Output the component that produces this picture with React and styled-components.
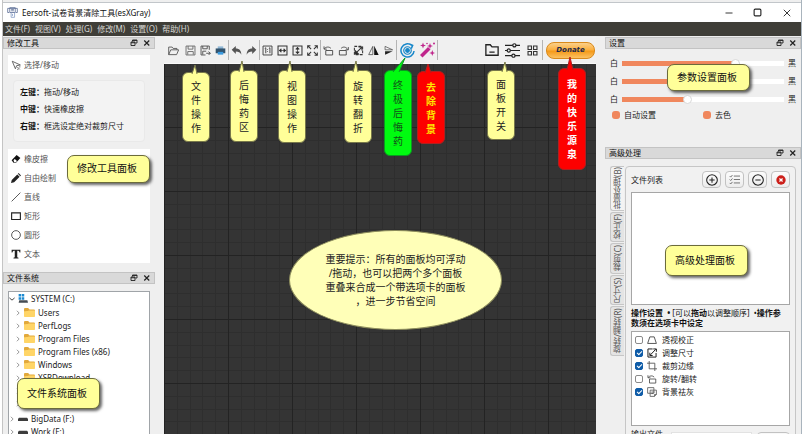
import React, { useState } from 'react';
import styled, { createGlobalStyle, css } from 'styled-components';

const GlobalStyle = createGlobalStyle`
    * {
        box-sizing: border-box;
    }
    body {
        margin: 0;
        background: #fff;
        font-family: 'Noto Sans', 'Noto Sans CJK SC', sans-serif;
        font-size: 8px;
        line-height: 12px;
        color: #222;
        overflow: hidden;
    }
    ul {
        list-style: none;
        margin: 0;
        padding: 0;
    }
    button, input {
        font: inherit;
        color: inherit;
        margin: 0;
        padding: 0;
    }
    svg {
        display: block;
        flex: none;
    }
`;

const Window = styled.div`
    height: 100vh;
    margin: 0 2px;
    padding-top: 2px;
    display: flex;
    flex-direction: column;
    background: #efefef;
    border-left: 1px solid #c4c4c4;
    border-right: 1px solid #a9b4bd;
    overflow: hidden;
`;

const TitleBar = styled.header`
    height: 20px;
    flex: none;
    display: flex;
    align-items: center;
    gap: 4px;
    padding-left: 4px;
    background: #fff;
    border-top: 1px solid #c2c6ca;
    h1 {
        margin: 0;
        flex: 1;
        font-size: 8px;
        font-weight: 400;
        color: #111;
    }
`;

const WindowButtons = styled.div`
    display: flex;
`;

const WindowButton = styled.button`
    width: 29px;
    height: 18px;
    display: flex;
    align-items: center;
    justify-content: center;
    border: 0;
    background: none;
`;

const MenuBar = styled.nav`
    height: 14px;
    flex: none;
    display: flex;
    align-items: center;
    gap: 5px;
    padding-left: 2px;
    background: #3f3e38;
`;

const MenuItem = styled.button`
    border: 0;
    background: none;
    color: #d6d6d2;
    line-height: 14px;
    white-space: nowrap;
`;

const Body = styled.div`
    flex: 1;
    min-height: 0;
    display: grid;
    grid-template-columns: 161px minmax(0, 1fr) 205px;
`;

const SideBar = styled.aside`
    min-width: 0;
    overflow: hidden;
    padding: ${(p) => (p.$right ? '1px 0 0 9px' : '1px 9px 0 0')};
`;

const Dock = styled.section`
    position: relative;
    height: ${(p) => (p.$height ? `${p.$height}px` : 'auto')};
`;

const DockHeader = styled.div`
    height: 12px;
    display: flex;
    align-items: center;
    gap: 5px;
    padding: 0 3px;
    background: #d9d9d9;
    border: 1px solid #c3c3c3;
    h2 {
        flex: 1;
        margin: 0;
        font-size: 8px;
        line-height: 10px;
        font-weight: 400;
        color: #111;
    }
    button {
        width: 8px;
        height: 8px;
        border: 0;
        background: none;
    }
`;

// ---- left docks

const ToolBox = styled.ul`
    margin: ${(p) => (p.$first ? '6px 5px 0' : '7px 5px 0')};
    background: #fff;
`;

const ToolButton = styled.button`
    width: 100%;
    height: 19px;
    display: flex;
    align-items: center;
    gap: 3px;
    padding-left: 3px;
    border: 0;
    background: none;
    color: #555;
    svg {
        color: #222;
    }
`;

const HintBox = styled.dl`
    height: 62px;
    margin: 6px 10px 0;
    padding: 2px 6px;
    border: 1px solid #e9e9e9;
    border-radius: 4px;
    background: #f3f3f3;
    div {
        display: flex;
        line-height: 17px;
    }
    dt {
        width: 24px;
        font-weight: 700;
        color: #111;
    }
    dd {
        margin: 0;
    }
`;

const Tree = styled.ul`
    height: 160px;
    margin: 7px 5px 0;
    border: 1px solid #a0a4a8;
    background: #fff;
    overflow: hidden;
    ul {
        padding: 1px 0 2px 6px;
    }
`;

const TreeRow = styled.div`
    height: 13px;
    display: flex;
    align-items: center;
    gap: 3px;
    white-space: nowrap;
    color: #222;
`;

// ---- centre

const Centre = styled.main`
    position: relative;
    min-width: 0;
    display: flex;
    flex-direction: column;
`;

const ToolBar = styled.div`
    height: 28px;
    flex: none;
    display: flex;
    align-items: center;
    padding: 1px 1px 0 0;
    background: #f0f0f0;
    border-bottom: 1px solid #fafafa;
`;

const IconButton = styled.button`
    width: ${(p) => p.$width || 15}px;
    height: 20px;
    display: flex;
    align-items: center;
    justify-content: center;
    border: 0;
    background: none;
`;

const Separator = styled.span`
    width: 1px;
    height: 20px;
    background: #b4b4b4;
`;

const Spacer = styled.span`
    flex: 1;
`;

const DonateButton = styled.button`
    width: 49px;
    height: 17px;
    margin-left: 3px;
    border: 1px solid #d98a1c;
    border-radius: 8px;
    background: linear-gradient(#fbd08a, #fbb040 45%, #f59a1a 55%, #fbc162);
    font: italic 700 7px/14px 'DejaVu Sans', sans-serif;
    color: #1f2a4a;
`;

const minor = [13, 26, 38, 51];
const gridLines = (dir) => `linear-gradient(to ${dir},
    transparent 63px, #232323 63px, #232323 64px)`;
const minorLines = (dir) =>
    `linear-gradient(to ${dir}, ${minor
        .map((m) => `transparent ${m - 1}px, #2e2e2e ${m - 1}px, #2e2e2e ${m}px, transparent ${m}px`)
        .join(', ')})`;

const Canvas = styled.div`
    position: relative;
    flex: 1;
    background: ${gridLines('right')}, ${gridLines('bottom')},
        ${minorLines('right')}, ${minorLines('bottom')}, #343434;
    background-size: 64px 64px;
    background-position: 1px 0;
`;

const Notice = styled.p`
    position: absolute;
    left: 125px;
    top: 166px;
    width: 213px;
    height: 100px;
    margin: 0;
    display: flex;
    align-items: center;
    justify-content: center;
    border: 1px solid #8c8c5c;
    border-radius: 50%;
    background: #ffffb8;
    font-size: 10px;
    line-height: 14px;
    text-align: center;
    white-space: pre;
`;

// ---- callouts

const tones = {
    yellow: css`
        --fill: #ffff99;
        --line: #77774a;
        color: #222;
    `,
    green: css`
        --fill: #00fb10;
        --line: #0a9a20;
        color: #14501a;
    `,
    red: css`
        --fill: #fd0000;
        --line: #b02020;
        color: #ffe600;
        font-weight: 700;
    `,
    redWhite: css`
        --fill: #fd0000;
        --line: #b02020;
        color: #fff;
        font-weight: 700;
    `,
};

const TipBox = styled.div`
    position: absolute;
    z-index: 2;
    ${(p) => (p.$right ? `right: ${p.$right}px;` : `left: ${p.$left}px;`)}
    top: ${(p) => p.$top}px;
    width: 28px;
    height: ${(p) => p.$height}px;
    padding: 0 8px;
    display: flex;
    align-items: center;
    justify-content: center;
    font-size: 10px;
    line-height: 14px;
    text-align: center;
    word-break: break-all;
    border: 1px solid var(--line);
    border-radius: 6px;
    background: var(--fill);
    ${(p) => tones[p.$tone]}
    svg {
        position: absolute;
        left: 0;
        bottom: 100%;
        margin-bottom: -1px;
        overflow: visible;
    }
`;

const PanelTip = styled.div`
    position: absolute;
    z-index: 2;
    left: ${(p) => p.$left}px;
    top: ${(p) => p.$top}px;
    width: 83px;
    height: ${(p) => p.$height}px;
    padding: 0 3px 2px 0;
    display: flex;
    align-items: center;
    justify-content: center;
    font-size: 10px;
    color: #111;
    border: 1px solid #6b6b3c;
    border-radius: 7px;
    background: #ffff99;
    box-shadow: 2px 2px 3px rgba(0, 0, 0, 0.6);
`;

// ---- right docks

const SliderRow = styled.label`
    height: 18px;
    display: flex;
    align-items: center;
    gap: 4px;
`;

const Range = styled.input`
    appearance: none;
    flex: 1;
    min-width: 0;
    height: 5px;
    background: linear-gradient(to right, #f0875d ${(p) => p.value}%, #fff ${(p) => p.value}%);
    &::-webkit-slider-thumb {
        appearance: none;
        width: 9px;
        height: 9px;
        border: 1px solid #d8d8d8;
        border-radius: 50%;
        background: #fff;
    }
`;

const Settings = styled.div`
    padding: 5px 5px 0;
`;

const SwitchRow = styled.div`
    display: grid;
    grid-template-columns: 1fr 1fr;
    padding: 1px 2px 0;
    label {
        display: flex;
        align-items: center;
        gap: 4px;
    }
    input {
        appearance: none;
        width: 8px;
        height: 8px;
        border-radius: 3px;
        background: #d0d0d0;
    }
    input:checked {
        background: #f0875d;
    }
`;

const Advanced = styled.div`
    display: flex;
    align-items: flex-start;
    padding: 7px 5px 0;
`;

const Tabs = styled.div`
    display: flex;
    flex-direction: column;
    gap: 1px;
    flex: none;
`;

const Tab = styled.button`
    width: 14px;
    height: ${(p) => p.$length}px;
    writing-mode: vertical-rl;
    transform: rotate(180deg);
    border: 1px solid #c6c6c6;
    border-left: 0;
    border-radius: 0 3px 3px 0;
    background: ${(p) => (p.$active ? '#f3f3f3' : '#e4e4e4')};
    color: #555;
    line-height: 12px;
    white-space: nowrap;
`;

const TabPanel = styled.div`
    flex: 1;
    min-width: 0;
    height: 290px;
    margin-left: 1px;
    padding: 4px 5px 0;
    border: 1px solid #c6c6c6;
    border-radius: 4px;
    background: #f1f1f1;
`;

const PanelHead = styled.div`
    display: flex;
    align-items: center;
    gap: 4px;
    margin-bottom: 4px;
    span {
        flex: 1;
    }
`;

const SmallButton = styled.button`
    width: 19px;
    height: 17px;
    display: flex;
    align-items: center;
    justify-content: center;
    border: 1px solid #c2c2c2;
    border-radius: 4px;
    background: linear-gradient(#fcfcfc, #ececec);
`;

const ListBox = styled.ul`
    height: ${(p) => p.$height}px;
    padding: 1px 3px;
    border: 1px solid #a6a6a6;
    background: #fff;
`;

const Note = styled.p`
    margin: 3px 0 3px;
    line-height: 10px;
    color: #111;
    white-space: pre;
`;

const CheckLabel = styled.label`
    height: 13px;
    display: flex;
    align-items: center;
    gap: 4px;
    svg {
        margin-right: 1px;
    }
`;

const CheckBox = styled.input`
    appearance: none;
    width: 8px;
    height: 8px;
    display: grid;
    place-items: center;
    border: 1px solid #8a8a8a;
    border-radius: 2px;
    background: #fff;
    &:checked {
        border-color: #0f5ca8;
        background: #0f5ca8;
    }
    &:checked::after {
        content: '';
        width: 4px;
        height: 2px;
        border: solid #fff;
        border-width: 0 0 1px 1px;
        transform: rotate(-45deg);
    }
`;

const OutputRow = styled.div`
    display: flex;
    align-items: flex-start;
    gap: 5px;
    padding-top: 2px;
    label {
        width: 35px;
    }
    input {
        flex: 1;
        min-width: 0;
        height: 16px;
        margin-top: 4px;
        border: 1px solid #e2e2e2;
        background: #fff;
    }
    button {
        width: 33px;
        height: 16px;
        margin-top: 4px;
        border: 1px solid #c2c2c2;
        border-radius: 4px;
        background: #f8f8f8;
    }
`;

// every glyph is drawn on a 16 x 16 board
const glyphs = {
    app: (
        <g fill="none" stroke="#5c6f96" strokeWidth="1.2">
            <path d="M3 8H1V2h14v6h-2M4 1h8v7H4zM6 3.5h4M6 5.5h4" />
            <path d="M6 8v7h5V8M8 10v3" stroke="#8ba0c8" />
        </g>
    ),
    open: <path d="M1 14V3h5l1.500 2H13v2M1 14l3-7h11.500l-3 7z" fill="none" stroke="#555" strokeWidth="1.300" />,
    save: <path d="M1.500 1.500h13v13h-13zM4.500 1.500v4.500h7V1.500M4 14V9.500h8V14" fill="none" stroke="#666" strokeWidth="1.300" />,
    saveAs: (
        <path d="M13.500 7V1.500h-12v13H8M4 1.500V5.500h6.500V1.500M4 14V9h5M9 12h6M12.500 9.500L15 12l-2.500 2.500" fill="none" stroke="#555" strokeWidth="1.400" />
    ),
    print: (
        <g>
            <path d="M4 2h8v4H4z" fill="#8fb7d6" />
            <path d="M1 5h14v7H1z" fill="#33546e" />
            <path d="M4 10h8v4H4z" fill="#3a9be0" />
        </g>
    ),
    undo: <path d="M1 7l6-5.500v3.500c5 0 8 3 8 9-2-3.500-4-4.500-8-4.500V13z" fill="#555" />,
    redo: <path d="M15 7L9 1.500V5c-5 0-8 3-8 9 2-3.500 4-4.500 8-4.500V13z" fill="#555" />,
    actual: (
        <path d="M1.500 1.500h13v13h-13zM4 5l1.500-1v8M10 5l1.500-1v8M8 6v1M8 9v1" fill="none" stroke="#444" strokeWidth="1.400" />
    ),
    fitWidth: (
        <g fill="none" stroke="#333" strokeWidth="1.500">
            <path d="M1.500 1.500h13v13h-13z" />
            <path d="M3 8h10M6 5.500v5L3.200 8zM10 5.500v5L12.800 8z" fill="#222" strokeWidth="1" />
        </g>
    ),
    fitHeight: (
        <g fill="none" stroke="#333" strokeWidth="1.500">
            <path d="M1.500 1.500h13v13h-13z" />
            <path d="M8 3v10M5.500 6h5L8 3.200zM5.500 10h5L8 12.800z" fill="#222" strokeWidth="1" />
        </g>
    ),
    full: (
        <path d="M1 5V1h4M11 1h4v4M15 11v4h-4M5 15H1v-4M1 1l5 5M15 1l-5 5M15 15l-5-5M1 15l5-5" fill="none" stroke="#333" strokeWidth="1.500" />
    ),
    rotateLeft: (
        <path d="M4 8h10v6.500H4zM2 5.500C4 2.500 9 2 11.500 5M1.500 2v4h4" fill="none" stroke="#444" strokeWidth="1.300" />
    ),
    rotateRight: (
        <path d="M2 8h10v6.500H2zM4.500 5C7 2 12 2.500 14 6.500M15 3v4h-4" fill="none" stroke="#444" strokeWidth="1.300" />
    ),
    rotate: (
        <g fill="none" stroke="#333" strokeWidth="1.500">
            <path d="M2 2h12v12H2z" strokeDasharray="4 2" />
            <path d="M3 13L13 3M8 3h5v5" />
            <path d="M3 8v5h5z" fill="#222" />
        </g>
    ),
    flipH: (
        <g>
            <path d="M7 2v12H1z" fill="none" stroke="#333" />
            <path d="M9 1v13.500h6.500z" fill="#111" />
        </g>
    ),
    flipV: (
        <g>
            <path d="M3 7V2l11 5z" fill="none" stroke="#444" />
            <path d="M3 9v5l11-5z" fill="#222" />
        </g>
    ),
    reset: (
        <g fill="none" stroke="#1787c9" strokeWidth="1.600">
            <path d="M12.500 2.500A7 7 0 1 0 15 8.500M10 1l3.500 1.500L12 6" />
            <circle cx="8" cy="8" r="4" strokeWidth="1.300" />
            <circle cx="8" cy="8" r="1.800" fill="#1787c9" />
        </g>
    ),
    wand: (
        <g fill="#c0268c">
            <path d="M1 13L9 5l2.500 2.500L3.500 15.500z" />
            <path d="M11 1l.8 2.200L14 4l-2.200.8L11 7l-.8-2.200L8 4l2.200-.8zM4 .5l.8 2.200 2.200.8-2.200.8L4 6.500l-.8-2.200L1 3.500l2.200-.8zM13.300 8l.8 2.200 1.900.8-1.900.8-.8 2.200-.8-2.200-2.200-.8 2.200-.8z" />
            <circle cx="15" cy="1.500" r="1" />
            <circle cx="8" cy="1.500" r=".8" />
        </g>
    ),
    folderBar: <path d="M1 2h5l2 2.500h7V14H1zM5 10.500h6" fill="none" stroke="#222" strokeWidth="1.500" />,
    sliders: (
        <g fill="#f0f0f0" stroke="#222" strokeWidth="1.300">
            <path d="M0 2.500h16M0 8h16M0 13.500h16" />
            <circle cx="10" cy="2.500" r="1.700" />
            <circle cx="4" cy="8" r="1.700" />
            <circle cx="9" cy="13.500" r="1.700" />
        </g>
    ),
    blocks: (
        <path d="M1.500 1.500h5v5h-5zM9.500 1.500h5v5h-5zM1.500 9.500h5v5h-5zM9.500 9.500h5v5h-5z" fill="none" stroke="#333" strokeWidth="1.600" />
    ),
    cursor: <path d="M2 2l5 12 2-5 6-1zM10 11l4 4M13 11l2 0M11 14v2" fill="none" stroke="#555" strokeWidth="1.400" />,
    eraser: (
        <g>
            <path d="M1 10L9 1.500l6 5L8 14H4z" fill="#111" />
            <path d="M4 10l2-2 3.500 3L8 13H5z" fill="#fff" />
        </g>
    ),
    pencil: <path d="M0 16l1.200-5L10 2.200l3.800 3.800L5 14.800zM11 1.200l1.200-1.200L16 3.800 14.800 5z" fill="#222" />,
    line: <path d="M1 15L15 1" stroke="#444" strokeWidth="1.400" />,
    rect: <path d="M1 3h14v10.500H1z" fill="none" stroke="#222" strokeWidth="1.800" />,
    circle: <circle cx="8" cy="8" r="7" fill="none" stroke="#444" strokeWidth="1.400" />,
    text: <path d="M1 1h14v4.500h-1.300c-.3-2-1-2.700-3.700-2.700v10.400l2 .6V15H4v-1.200l2-.6V2.800c-2.700 0-3.400.7-3.700 2.700H1z" fill="#222" />,
    float: <path d="M5 5V2h9v6h-3M2 6h8v7H2zM2 7.500h8M5 3h9" fill="none" stroke="#222" strokeWidth="1.800" />,
    close: <path d="M2.500 3l10 10M12.500 3l-10 10" stroke="#222" strokeWidth="2.400" />,
    minimise: <path d="M1 8h14" stroke="#222" strokeWidth="1.800" />,
    maximise: <rect x="2" y="2" width="12" height="12" rx="2" fill="none" stroke="#222" strokeWidth="2" />,
    quit: <path d="M1.500 1.500l13 13M14.500 1.500l-13 13" stroke="#222" strokeWidth="1.800" />,
    right: <path d="M5 2l6 6-6 6" fill="none" stroke="#777" strokeWidth="2" />,
    down: <path d="M1 5l7 6 7-6" fill="none" stroke="#333" strokeWidth="2.400" />,
    folder: (
        <g>
            <path d="M0 3c0-1 .5-1.500 1.500-1.500H6L8 3.500h6.500c1 0 1.500.5 1.500 1.500v8H0z" fill="#e2a93c" />
            <path d="M0 6c3 0 5 0 7-1h9v8.500c0 .6-.4 1-1 1H1c-.6 0-1-.4-1-1z" fill="#ffd567" />
        </g>
    ),
    winDrive: (
        <g>
            <path d="M1 0h4v4H1zM6 0h4v4H6zM1 5h4v4H1zM6 5h4v4H6z" fill="#1c8ad1" />
            <path d="M2 10h13l1 4H1z" fill="#444c54" />
        </g>
    ),
    drive: <path d="M1.500 6h13l1.500 2v3H0V8z" fill="#3c3c3c" />,
    add: <path d="M8 1a7 7 0 1 0 .01 0M8 4.500v7M4.500 8h7" fill="none" stroke="#222" strokeWidth="1.400" />,
    tasks: (
        <path d="M1 3l1.500 1.500L5 1.500M1 8l1.500 1.500L5 6.500M1 13l1.500 1.500L5 11.500M7 3h9M7 8h9M7 13h9" fill="none" stroke="#666" strokeWidth="1.300" />
    ),
    remove: <path d="M8 1a7 7 0 1 0 .01 0M4.500 8h7" fill="none" stroke="#222" strokeWidth="1.400" />,
    clear: (
        <g>
            <circle cx="8" cy="8" r="7.500" fill="#cc1f1a" />
            <path d="M5.500 5.500l5 5M10.500 5.500l-5 5" stroke="#fff" strokeWidth="2" />
        </g>
    ),
    trapezoid: <path d="M4.500 3h7L15 13.500H1z" fill="none" stroke="#444" strokeWidth="1.400" />,
    resize: (
        <g fill="none" stroke="#222" strokeWidth="1.600">
            <path d="M9 1.500H1.500v13h13V8M5 11.500L14 2M10 1.500h5V6M4.500 7.500v4.500H9" />
        </g>
    ),
    crop: <path d="M3.500 0v12.500H16M0 3.500h12.500V16" fill="none" stroke="#555" strokeWidth="1.400" />,
    layers: (
        <path d="M1 1h10v9H1zM5 5h10v7l-3 3H5zM12 15v-3h3M7 8h5M7 10.500h3" fill="none" stroke="#555" strokeWidth="1.300" />
    ),
};

const Icon = ({ name, size = 10 }) => (
    <svg width={size} height={size} viewBox="0 0 16 16" aria-hidden="true">
        {glyphs[name]}
    </svg>
);

const menus = ['文件(F)', '视图(V)', '处理(G)', '修改(M)', '设置(O)', '帮助(H)'];

const hints = [
    ['左键：', '拖动/移动'],
    ['中键：', '快速橡皮擦'],
    ['右键：', '框选设定绝对裁剪尺寸'],
];

const tools = [
    ['eraser', '橡皮擦'],
    ['pencil', '自由绘制'],
    ['line', '直线'],
    ['rect', '矩形'],
    ['circle', '圆形'],
    ['text', '文本'],
];

const folders = ['Users', 'PerfLogs', 'Program Files', 'Program Files (x86)', 'Windows', 'XSRDownload', '', ''];

const toolGroups = [
    [['open', '打开', 19], ['save', '保存'], ['saveAs', '另存为'], ['print', '打印']],
    [['undo', '撤销'], ['redo', '重做']],
    [['actual', '原始大小'], ['fitWidth', '适合宽度'], ['fitHeight', '适合高度'], ['full', '全屏']],
    [['rotateLeft', '左转'], ['rotateRight', '右转'], ['rotate', '旋转'], ['flipH', '水平翻转'], ['flipV', '垂直翻转']],
    [['reset', '还原', 20, 15], ['wand', '去除背景', 20, 16]],
];

const panelSwitches = [['folderBar', '文件系统', 20, 14], ['sliders', '设置', 20, 15], ['blocks', '高级处理', 20, 11]];

// tail: [base left, base right, tip x, tip height above the box]
const tips = [
    { text: '文件操作', tone: 'yellow', left: 18, top: 36, height: 70, tail: [9, 14, 12, 9] },
    { text: '后悔药区', tone: 'yellow', left: 66, top: 34, height: 72, tail: [8, 13, 11, 11] },
    { text: '视图操作', tone: 'yellow', left: 114, top: 34, height: 73, tail: [8, 13, 11, 11] },
    { text: '旋转翻折', tone: 'yellow', left: 180, top: 34, height: 73, tail: [8, 13, 11, 11] },
    { text: '终极后悔药', tone: 'green', left: 220, top: 34, height: 86, tail: [8, 14, 20, 14] },
    { text: '去除背景', tone: 'red', left: 253, top: 35, height: 73, tail: [7, 13, 10, 9] },
    { text: '面板开关', tone: 'yellow', right: 81, top: 34, height: 70, tail: [14, 19, 17, 10] },
    { text: '我的快乐源泉', tone: 'redWhite', right: 10, top: 32, height: 102, tail: [8, 14, 11, 13] },
];

const tabs = [
    ['批量处理(B)', 45],
    ['校正(F)', 30],
    ['裁剪(C)', 31],
    ['尺寸(S)', 30],
    ['旋转/翻转(R)', 50],
];

const operations = [
    ['trapezoid', '透视校正', false],
    ['resize', '调整尺寸', true],
    ['crop', '裁剪边缘', true],
    ['rotateLeft', '旋转/翻转', false],
    ['layers', '背景祛灰', true],
];

const DockTitle = ({ title }) => (
    <DockHeader>
        <h2>{title}</h2>
        <button aria-label="浮动">
            <Icon name="float" size={8} />
        </button>
        <button aria-label="关闭">
            <Icon name="close" size={8} />
        </button>
    </DockHeader>
);

const Tip = ({ text, tone, left, right, top, height, tail }) => {
    const [a, b, x, h] = tail;
    return (
        <TipBox $tone={tone} $left={left} $right={right} $top={top} $height={height}>
            <svg width="26" height={h} aria-hidden="true">
                <path d={`M${a} ${h}L${x} 0L${b} ${h}`} fill="var(--fill)" stroke="var(--line)" />
                <path d={`M${a} ${h}h${b - a}v1h${a - b}z`} fill="var(--fill)" />
            </svg>
            {text}
        </TipBox>
    );
};

const ToolIcon = ({ item: [name, label, width, size] }) => (
    <IconButton $width={width} aria-label={label}>
        <Icon name={name} size={size || 11} />
    </IconButton>
);

const LevelSlider = ({ initial }) => {
    const [value, setValue] = useState(initial);
    return (
        <SliderRow>
            白
            <Range type="range" value={value} onChange={(e) => setValue(Number(e.target.value))} />
            黑
        </SliderRow>
    );
};

const App = () => (
    <>
        <GlobalStyle />
        <Window>
            <TitleBar>
                <Icon name="app" size={11} />
                <h1>Eersoft-试卷背景清除工具(esXGray)</h1>
                <WindowButtons>
                    <WindowButton aria-label="最小化">
                        <Icon name="minimise" size={8} />
                    </WindowButton>
                    <WindowButton aria-label="最大化">
                        <Icon name="maximise" size={9} />
                    </WindowButton>
                    <WindowButton aria-label="关闭窗口">
                        <Icon name="quit" size={8} />
                    </WindowButton>
                </WindowButtons>
            </TitleBar>
            <MenuBar>
                {menus.map((m) => (
                    <MenuItem key={m}>{m}</MenuItem>
                ))}
            </MenuBar>
            <Body>
                <SideBar>
                    <Dock $height={235}>
                        <DockTitle title="修改工具" />
                        <ToolBox $first>
                            <li>
                                <ToolButton>
                                    <Icon name="cursor" />
                                    选择/移动
                                </ToolButton>
                            </li>
                        </ToolBox>
                        <HintBox>
                            {hints.map(([key, text]) => (
                                <div key={key}>
                                    <dt>{key}</dt>
                                    <dd>{text}</dd>
                                </div>
                            ))}
                        </HintBox>
                        <ToolBox>
                            {tools.map(([icon, label]) => (
                                <li key={icon}>
                                    <ToolButton>
                                        <Icon name={icon} />
                                        {label}
                                    </ToolButton>
                                </li>
                            ))}
                        </ToolBox>
                        <PanelTip $left={64} $top={118} $height={28}>
                            修改工具面板
                        </PanelTip>
                    </Dock>
                    <Dock>
                        <DockTitle title="文件系统" />
                        <Tree>
                            <li>
                                <TreeRow>
                                    <Icon name="down" size={6} />
                                    <Icon name="winDrive" />
                                    SYSTEM (C:)
                                </TreeRow>
                                <ul>
                                    {folders.map((name, i) => (
                                        <li key={i}>
                                            <TreeRow>
                                                <Icon name="right" size={6} />
                                                <Icon name="folder" size={11} />
                                                {name}
                                            </TreeRow>
                                        </li>
                                    ))}
                                </ul>
                            </li>
                            {['BigData (F:)', 'Work (E:)'].map((name) => (
                                <li key={name}>
                                    <TreeRow>
                                        <Icon name="right" size={6} />
                                        <Icon name="drive" />
                                        {name}
                                    </TreeRow>
                                </li>
                            ))}
                        </Tree>
                        <PanelTip $left={14} $top={106} $height={31}>
                            文件系统面板
                        </PanelTip>
                    </Dock>
                </SideBar>
                <Centre>
                    <ToolBar>
                        {toolGroups.map((group, i) => (
                            <React.Fragment key={i}>
                                {group.map((item) => (
                                    <ToolIcon key={item[0]} item={item} />
                                ))}
                                <Separator />
                            </React.Fragment>
                        ))}
                        <Spacer />
                        {panelSwitches.map((item) => (
                            <ToolIcon key={item[0]} item={item} />
                        ))}
                        <Separator />
                        <DonateButton>Donate</DonateButton>
                    </ToolBar>
                    <Canvas>
                        <Notice>
                            {'重要提示：所有的面板均可浮动\n/拖动，也可以把两个多个面板\n重叠来合成一个带选项卡的面板\n，进一步节省空间'}
                        </Notice>
                    </Canvas>
                    {tips.map((tip) => (
                        <Tip key={tip.text} {...tip} />
                    ))}
                </Centre>
                <SideBar $right>
                    <Dock $height={110}>
                        <DockTitle title="设置" />
                        <Settings>
                            <LevelSlider initial={71} />
                            <LevelSlider initial={55} />
                            <LevelSlider initial={40} />
                            <SwitchRow>
                                <label>
                                    <input type="checkbox" defaultChecked />
                                    自动设置
                                </label>
                                <label>
                                    <input type="checkbox" defaultChecked />
                                    去色
                                </label>
                            </SwitchRow>
                        </Settings>
                        <PanelTip $left={62} $top={27} $height={27}>
                            参数设置面板
                        </PanelTip>
                    </Dock>
                    <Dock>
                        <DockTitle title="高级处理" />
                        <Advanced>
                            <Tabs role="tablist">
                                {tabs.map(([label, length], i) => (
                                    <Tab key={label} role="tab" aria-selected={i === 0} $active={i === 0} $length={length}>
                                        {label}
                                    </Tab>
                                ))}
                            </Tabs>
                            <TabPanel>
                                <PanelHead>
                                    <span>文件列表</span>
                                    <SmallButton aria-label="添加">
                                        <Icon name="add" size={12} />
                                    </SmallButton>
                                    <SmallButton aria-label="全选">
                                        <Icon name="tasks" size={11} />
                                    </SmallButton>
                                    <SmallButton aria-label="移除">
                                        <Icon name="remove" size={12} />
                                    </SmallButton>
                                    <SmallButton aria-label="清空">
                                        <Icon name="clear" />
                                    </SmallButton>
                                </PanelHead>
                                <ListBox $height={113} />
                                <Note>
                                    <b>{'操作设置  •'}</b>
                                    {' [可以'}
                                    <b>拖动</b>
                                    {'以调整顺序]  •'}
                                    <b>{'操作参\n数须在选项卡中设定'}</b>
                                </Note>
                                <ListBox $height={95}>
                                    {operations.map(([icon, label, checked]) => (
                                        <li key={label}>
                                            <CheckLabel>
                                                <CheckBox type="checkbox" defaultChecked={checked} />
                                                <Icon name={icon} />
                                                {label}
                                            </CheckLabel>
                                        </li>
                                    ))}
                                </ListBox>
                                <OutputRow>
                                    <label htmlFor="output">输出文件</label>
                                    <input id="output" type="text" />
                                    <button aria-label="浏览" />
                                </OutputRow>
                            </TabPanel>
                        </Advanced>
                        <PanelTip $left={60} $top={98} $height={31}>
                            高级处理面板
                        </PanelTip>
                    </Dock>
                </SideBar>
            </Body>
        </Window>
    </>
);

export default App;
